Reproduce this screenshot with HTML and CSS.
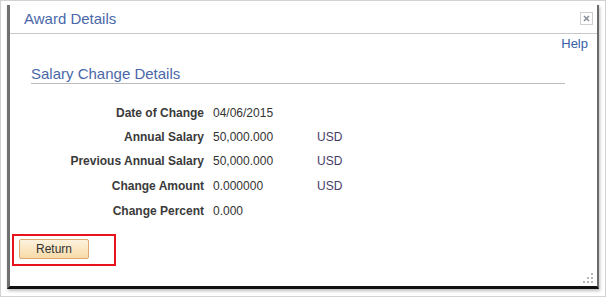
FILE: index.html
```html
<!DOCTYPE html>
<html>
<head>
<meta charset="utf-8">
<title>Award Details</title>
<link rel="stylesheet" href="styles.css">
</head>
<body>
<div class="frame">
  <div class="dialog">
    <div class="header">
      <span class="title">Award Details</span>
      <span class="close">
        <svg width="7" height="7" viewBox="0 0 7 7"><path d="M1 1L6 6M6 1L1 6" stroke="#8a9098" stroke-width="1.6"/></svg>
      </span>
    </div>
    <div class="body">
      <div class="help-row"><a class="help">Help</a></div>
      <div class="section-title">Salary Change Details</div>
      <div class="grid">
        <div class="lbl">Date of Change</div><div class="val">04/06/2015</div><div class="cur"></div>
        <div class="lbl">Annual Salary</div><div class="val">50,000.000</div><div class="cur">USD</div>
        <div class="lbl">Previous Annual Salary</div><div class="val">50,000.000</div><div class="cur">USD</div>
        <div class="lbl">Change Amount</div><div class="val">0.000000</div><div class="cur">USD</div>
        <div class="lbl">Change Percent</div><div class="val">0.000</div><div class="cur"></div>
      </div>
      <div class="highlight">
        <button class="btn">Return</button>
      </div>
    </div>
    <div class="grip">
      <svg width="11" height="11" viewBox="0 0 11 11">
        <rect x="8" y="0" width="2" height="2" fill="#b8b8b8"/>
        <rect x="4" y="4" width="2" height="2" fill="#b8b8b8"/>
        <rect x="8" y="4" width="2" height="2" fill="#b8b8b8"/>
        <rect x="0" y="8" width="2" height="2" fill="#b8b8b8"/>
        <rect x="4" y="8" width="2" height="2" fill="#b8b8b8"/>
        <rect x="8" y="8" width="2" height="2" fill="#b8b8b8"/>
      </svg>
    </div>
  </div>
</div>
</body>
</html>
```

FILE: styles.css
```css
* { box-sizing: border-box; }
html, body { margin: 0; padding: 0; background: #ffffff; }
body { font-family: "Liberation Sans", Arial, sans-serif; }

.frame {
  width: 606px;
  height: 297px;
  border: 1px solid #d2d2d2;
  padding: 4px 0 0 6px;
  background: #fff;
}

.dialog {
  position: relative;
  width: 592px;
  height: 284px;
  background: #fff;
  border-left: 3px solid #707070;
  border-right: 2px solid #6a6a6a;
  border-bottom: 3px solid #111;
  box-shadow: 1px 2px 3px rgba(0,0,0,0.25);
}

.header {
  height: 29px;
  border-bottom: 1px solid #c9c9c9;
  display: flex;
  justify-content: space-between;
  align-items: flex-start;
  padding: 0 4px 0 14px;
}
.title {
  font-size: 15px;
  line-height: 28px;
  color: #4a68a8;
}
.close {
  margin-top: 7px;
  width: 13px;
  height: 13px;
  border: 1px solid #cfcfcf;
  display: flex;
  align-items: center;
  justify-content: center;
}

.body { padding: 0; }

.help-row {
  display: flex;
  justify-content: flex-end;
  margin-top: 2px;
  padding-right: 9px;
  height: 16px;
}
.help {
  font-size: 13px;
  line-height: 16px;
  color: #3560a8;
}

.section-title {
  margin: 13px 32px 0 21px;
  height: 19px;
  line-height: 18px;
  font-size: 15px;
  color: #4a68a8;
  border-bottom: 1px solid #bcbcbc;
}

.grid {
  margin-top: 17px;
  display: grid;
  grid-template-columns: 194px 104px auto;
  grid-template-rows: 24px 24px 25px 25px 24px;
  column-gap: 9px;
  font-size: 12px;
  line-height: 24px;
  color: #333;
}
.grid .cur { margin-left: -9px; }
.lbl { text-align: right; font-weight: bold; color: #3a3a3a; }
.val { color: #333; }
.cur { color: #483c68; }

.highlight {
  margin: 11px 0 0 2px;
  width: 104px;
  height: 32px;
  border: 2px solid #e8141b;
  padding: 3px 0 0 5px;
}
.btn {
  display: block;
  width: 70px;
  height: 20px;
  padding: 0;
  margin: 0;
  font-family: "Liberation Sans", Arial, sans-serif;
  font-size: 12px;
  color: #333;
  background: linear-gradient(#fdf2de, #f8dba8);
  border: 1px solid #dca870;
  border-radius: 2px;
}

.grip {
  position: absolute;
  right: 3px;
  bottom: 2px;
  line-height: 0;
}
```
